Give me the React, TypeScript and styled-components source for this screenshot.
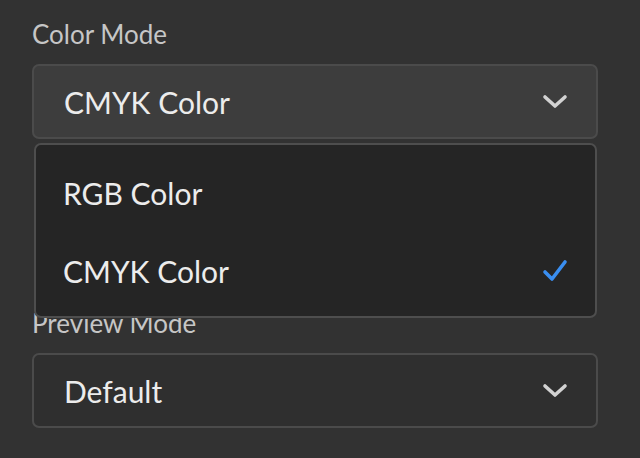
import React from "react";
import styled, { createGlobalStyle } from "styled-components";

const GlobalStyle = createGlobalStyle`
  html, body {
    margin: 0;
    padding: 0;
    background: #323232;
  }
  body {
    font-family: "Lato", "Noto Sans", sans-serif;
  }
`;

const Page = styled.div`
  width: 640px;
  height: 458px;
  box-sizing: border-box;
  padding: 18px 42px 0 32px;
  display: flex;
  flex-direction: column;
  overflow: hidden;
`;

const Field = styled.div<{ $offset: number }>`
  position: relative;
  display: flex;
  flex-direction: column;
  margin-top: ${(p) => p.$offset}px;
`;

const Label = styled.div`
  color: #c6c6c6;
  font-size: 26px;
  line-height: 32px;
  height: 32px;
  margin-bottom: 14px;
`;

const Picker = styled.div<{ $open?: boolean }>`
  height: 75px;
  box-sizing: border-box;
  border: 2px solid #4b4b4b;
  border-radius: 7px;
  background: ${(p) => (p.$open ? "#3d3d3d" : "#2f2f2f")};
  display: flex;
  align-items: center;
  justify-content: space-between;
  padding: 0 28px 0 30px;
  color: #ececec;
  font-size: 30px;
`;

const Menu = styled.div`
  position: absolute;
  left: 2px;
  right: 1px;
  top: calc(100% + 4px);
  z-index: 2;
  box-sizing: border-box;
  border: 2px solid #4e4e4e;
  border-radius: 7px;
  background: #252525;
  padding: 9px 0 6px;
  display: flex;
  flex-direction: column;
`;

const Item = styled.div`
  height: 78px;
  display: flex;
  align-items: center;
  justify-content: space-between;
  padding: 0 27px 0 27px;
  color: #ececec;
  font-size: 30px;
`;

const Chevron = () => (
  <svg width="26" height="16" viewBox="0 0 26 16" fill="none">
    <path
      d="M3 3 L13 12 L23 3"
      stroke="#d2d2d2"
      strokeWidth="3.6"
      strokeLinecap="round"
      strokeLinejoin="round"
    />
  </svg>
);

const Check = () => (
  <svg width="26" height="24" viewBox="0 0 26 24" fill="none">
    <path
      d="M3 13 L10 20 L23 3"
      stroke="#3a8ef0"
      strokeWidth="3.6"
      strokeLinecap="round"
      strokeLinejoin="round"
    />
  </svg>
);

const options = ["RGB Color", "CMYK Color"];

export default function App() {
  const selected = "CMYK Color";
  return (
    <>
      <GlobalStyle />
      <Page>
        <Field $offset={0}>
          <Label>Color Mode</Label>
          <Picker $open>
            <span>{selected}</span>
            <Chevron />
          </Picker>
          <Menu>
            {options.map((o) => (
              <Item key={o}>
                <span>{o}</span>
                {o === selected && <Check />}
              </Item>
            ))}
          </Menu>
        </Field>
        <Field $offset={168}>
          <Label>Preview Mode</Label>
          <Picker>
            <span>Default</span>
            <Chevron />
          </Picker>
        </Field>
      </Page>
    </>
  );
}
